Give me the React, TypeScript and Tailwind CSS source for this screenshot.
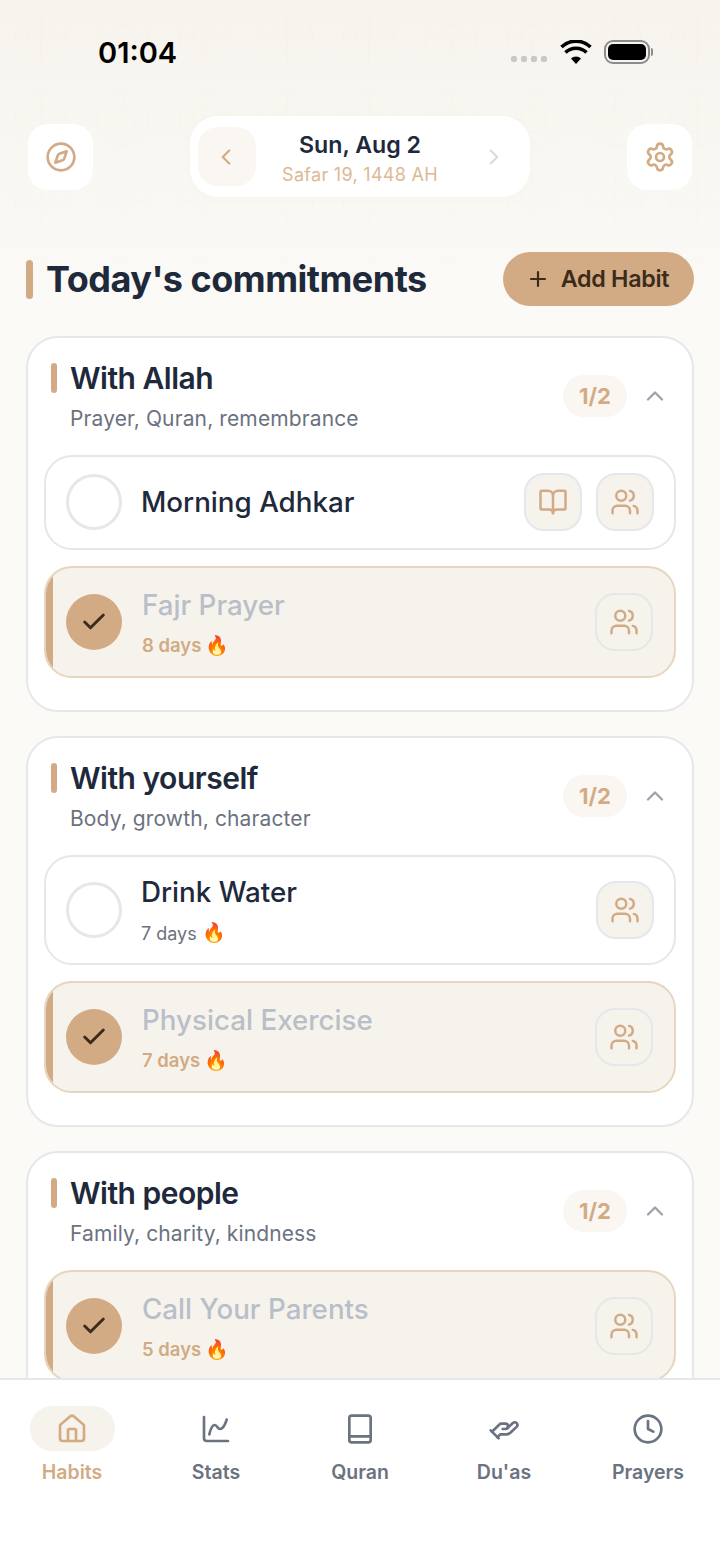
import { Compass, ChevronLeft, ChevronRight, ChevronUp, Settings, Plus, BookOpen, Users, Check, House, ChartSpline, HandHelping, Clock } from "lucide-react";

type Habit = { name: string; done?: boolean; days?: string; book?: boolean };

const groups: { title: string; sub: string; habits: Habit[] }[] = [
  { title: "With Allah", sub: "Prayer, Quran, remembrance", habits: [{ name: "Morning Adhkar", book: true }, { name: "Fajr Prayer", done: true, days: "8 days" }] },
  { title: "With yourself", sub: "Body, growth, character", habits: [{ name: "Drink Water", days: "7 days" }, { name: "Physical Exercise", done: true, days: "7 days" }] },
  { title: "With people", sub: "Family, charity, kindness", habits: [{ name: "Call Your Parents", done: true, days: "5 days" }] },
];

function QuranBook({ size = 32, strokeWidth = 2 }: { size?: number; strokeWidth?: number }) {
  return (
    <svg width={size} height={size} viewBox="0 0 24 24" fill="none" stroke="currentColor" strokeWidth={strokeWidth} strokeLinecap="round" strokeLinejoin="round">
      <rect x="4" y="2" width="16" height="20" rx="1.8" />
      <path d="M4 17.5h16" />
    </svg>
  );
}

function SquareBtn({ children }: { children: React.ReactNode }) {
  return (
    <div className="flex h-[58px] w-[58px] shrink-0 items-center justify-center rounded-[20px] border-2 border-[#e5e7eb] bg-[#f6f3ed] text-[#d2ab85]">
      {children}
    </div>
  );
}

function Row({ h }: { h: Habit }) {
  if (h.done) {
    return (
      <div className="relative flex items-center overflow-hidden rounded-[28px] border-2 border-[#e8d5c0] bg-[#f6f3ed] pb-[16px] pl-5 pr-[21px] pt-[15px]">
        <div className="absolute bottom-0 left-0 top-0 w-[7px] bg-[#d2ab85]" />
        <div className="flex h-[56px] w-[56px] shrink-0 items-center justify-center rounded-full bg-[#d2ab85] text-[#3d2b1a]">
          <Check size={28} strokeWidth={2.5} />
        </div>
        <div className="ml-5 flex-1">
          <div className="text-[27.75px] leading-[44px] font-medium text-[#b9bfc8]">{h.name}</div>
          <div className="mt-[5px] flex h-[28px] items-center text-[18.5px] font-semibold text-[#d2ab85]">
            <span>{h.days}</span><span className="ml-[4px] text-[19px]">🔥</span>
          </div>
        </div>
        <SquareBtn><Users size={30} strokeWidth={2} /></SquareBtn>
      </div>
    );
  }
  return (
    <div className={`flex items-center rounded-[28px] border-2 border-[#e5e7eb] bg-white pl-5 pr-5 pt-4 ${h.days ? "pb-4" : "pb-[17px]"}`}>
      <div className="h-[56px] w-[56px] shrink-0 rounded-full border-[3px] border-[#e5e7eb]" />
      <div className="ml-[19px] flex-1">
        <div className={`text-[27.75px] font-medium text-[#1e293b] ${h.days ? "leading-[38px]" : "-mt-[1px] leading-[44px]"}`}>{h.name}</div>
        {h.days && (
          <div className="mt-[8px] flex h-[28px] items-center text-[18px] text-[#6b7280]">
            <span>{h.days}</span><span className="ml-[5px] text-[19px]">🔥</span>
          </div>
        )}
      </div>
      <div className="flex gap-[14px]">
        {h.book && <SquareBtn><BookOpen size={30} strokeWidth={2} /></SquareBtn>}
        <SquareBtn><Users size={30} strokeWidth={2} /></SquareBtn>
      </div>
    </div>
  );
}

function Group({ g }: { g: (typeof groups)[number] }) {
  return (
    <section className="rounded-[32px] border-2 border-[#e5e7eb] bg-white px-4 pb-8">
      <div className="flex h-[117px] items-start justify-between pt-[21px]">
        <div>
          <div className="flex items-center pl-[7px]">
            <div className="h-[30px] w-[6px] rounded-full bg-[#d2ab85]" />
            <h2 className="ml-[13px] text-[30px] leading-[38px] font-semibold tracking-[-0.5px] text-[#1e293b]">{g.title}</h2>
          </div>
          <p className="ml-[26px] mt-[5px] text-[21px] leading-[34px] tracking-[0.12px] text-[#6b7280]">{g.sub}</p>
        </div>
        <div className="mt-[16px] flex items-center pr-[7px]">
          <div className="flex h-[42px] w-[64px] items-center justify-center rounded-full bg-[#faf6f1] text-[22px] font-bold text-[#d2ab85]">1/2</div>
          <ChevronUp size={28} strokeWidth={2} className="ml-[14px] text-[#9ca3af]" />
        </div>
      </div>
      <div className="flex flex-col gap-4">
        {g.habits.map((h) => <Row key={h.name} h={h} />)}
      </div>
    </section>
  );
}

const tabs = [
  { label: "Habits", Icon: House, active: true },
  { label: "Stats", Icon: ChartSpline },
  { label: "Quran", Icon: QuranBook },
  { label: "Du'as", Icon: HandHelping },
  { label: "Prayers", Icon: Clock },
];

function Pattern() {
  return (
    <svg className="absolute left-0 top-0 -z-10" width="720" height="320">
      <defs>
        <pattern id="rings" x="0" y="-3" width="82" height="82" patternUnits="userSpaceOnUse">
          <g fill="none" stroke="#f2ede3" strokeWidth="1">
            <circle cx="41" cy="41" r="26" />
            <circle cx="41" cy="41" r="13" />
            <path d="M41 15v52M15 41h52" />
          </g>
        </pattern>
        <linearGradient id="fade" x1="0" y1="0" x2="0" y2="1">
          <stop offset="0" stopColor="#fff" stopOpacity="0.4" />
          <stop offset="1" stopColor="#fff" stopOpacity="0" />
        </linearGradient>
        <mask id="fadeMask"><rect width="720" height="320" fill="url(#fade)" /></mask>
      </defs>
      <rect width="720" height="320" fill="url(#rings)" mask="url(#fadeMask)" />
    </svg>
  );
}

export default function App() {
  return (
    <div className="relative isolate flex h-[1564px] w-[720px] flex-col overflow-hidden bg-gradient-to-b from-[#f7f4ee] to-[#fbfaf6] to-[300px] font-['Inter',sans-serif]">
      <Pattern />
      <div className="flex h-[116px] shrink-0 items-start justify-between pl-[98px] pr-[67px] pt-[35px]">
        <span className="text-[29px] leading-[36px] font-semibold text-black">01:04</span>
        <div className="flex items-center pt-[5px]">
          <div className="mr-[1px] mt-[14px] flex gap-[4px]">
            {[0, 1, 2, 3].map((i) => <div key={i} className="h-[6px] w-[6px] rounded-[2px] bg-[#c8c8c8]" />)}
          </div>
          <svg width="32" height="24" viewBox="0 0 32 24" className="ml-[12px]">
            <path d="M16 24l-5-5.5a7 7 0 0 1 10 0z" fill="#000" />
            <path d="M5.5 12.5a15 15 0 0 1 21 0" fill="none" stroke="#000" strokeWidth="3.6" />
            <path d="M1.5 7a21 21 0 0 1 29 0" fill="none" stroke="#000" strokeWidth="3.6" />
          </svg>
          <div className="ml-[12px] flex items-center">
            <div className="h-[24px] w-[46px] rounded-[9px] border-2 border-[#8c8c8c] p-[2px]">
              <div className="h-full w-full rounded-[5px] bg-black" />
            </div>
            <div className="ml-[1px] h-[8px] w-[2px] rounded-r bg-[#8c8c8c]" />
          </div>
        </div>
      </div>

      <div className="flex shrink-0 items-center justify-between pl-[28px] pr-[28px]">
        <div className="flex h-[66px] w-[65px] items-center justify-center rounded-[20px] bg-white text-[#d2ab85]">
          <Compass size={32} strokeWidth={2} />
        </div>
        <div className="flex h-[81px] w-[340px] items-center justify-between rounded-[28px] bg-white px-2 shadow-[0_1px_6px_rgba(210,171,133,0.06)]">
          <div className="flex h-[59px] w-[58px] items-center justify-center rounded-[20px] bg-[#faf6f1] pr-[2px] text-[#d2ab85]">
            <ChevronLeft size={26} strokeWidth={2} />
          </div>
          <div className="flex flex-col items-center pt-[3px]">
            <div className="text-[23.2px] leading-[32px] font-semibold text-[#1e293b]">Sun, Aug 2</div>
            <div className="mt-[1px] text-[18px] leading-[26px] tracking-[0.3px] text-[#dcb994]">Safar 19, 1448 AH</div>
          </div>
          <div className="flex h-[59px] w-[58px] items-center justify-center pl-[2px] text-[#d8dbe1]">
            <ChevronRight size={26} strokeWidth={2} />
          </div>
        </div>
        <div className="flex h-[66px] w-[65px] items-center justify-center rounded-[20px] bg-white text-[#d2ab85]">
          <Settings size={32} strokeWidth={2} />
        </div>
      </div>

      <div className="mt-[55px] flex shrink-0 items-center justify-between pl-[26px] pr-[26px]">
        <div className="flex items-center">
          <div className="h-[39px] w-[7px] rounded-full bg-[#d2ab85]" />
          <h1 className="ml-[13px] text-[36px] leading-[54px] font-bold tracking-[-0.5px] text-[#1e293b]">Today's commitments</h1>
        </div>
        <div className="flex h-[54px] w-[191px] items-center justify-center gap-[11px] rounded-full bg-[#d2ab85] pr-[2px] text-[#3d2b1a]">
          <Plus size={24} strokeWidth={2.2} />
          <span className="pt-[1px] text-[23.3px] font-semibold tracking-[-0.3px]">Add Habit</span>
        </div>
      </div>

      <div className="mt-[30px] flex min-h-0 flex-1 flex-col gap-6 overflow-hidden px-[26px]">
        {groups.map((g) => <div key={g.title} className="shrink-0"><Group g={g} /></div>)}
      </div>

      <nav className="grid h-[186px] shrink-0 grid-cols-5 border-t-2 border-[#e5e7eb] bg-white pt-[26px]">
        {tabs.map(({ label, Icon, active }) => (
          <div key={label} className="flex flex-col items-center">
            <div className={`flex h-[45px] w-[85px] items-center justify-center rounded-[22px] ${active ? "bg-[#f6f3ed] text-[#d2ab85]" : "text-[#6b7280]"}`}>
              <Icon size={32} strokeWidth={2} />
            </div>
            <span className={`mt-[6px] text-[19.5px] leading-[30px] font-semibold ${active ? "text-[#d2ab85]" : "text-[#6b7280]"}`}>{label}</span>
          </div>
        ))}
      </nav>
    </div>
  );
}
